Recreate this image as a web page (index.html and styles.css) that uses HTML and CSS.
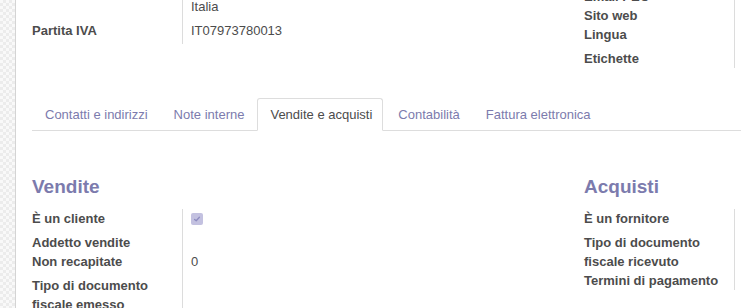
FILE: index.html
```html
<!DOCTYPE html>
<html lang="it">
<head>
<meta charset="UTF-8">
<meta name="viewport" content="width=device-width, initial-scale=1.0">
<title>Contatto - Vendite e acquisti</title>
<link rel="stylesheet" href="styles.css">
</head>
<body>
<div class="page">
    <div class="gutter"></div>
    <div class="sheet">
        <div class="groups top">
            <div class="group left pad-top">
                <div class="row"><div class="label"></div><div class="value">Italia</div></div>
                <div class="row vat"><div class="label">Partita IVA</div><div class="value">IT07973780013</div></div>
            </div>
            <div class="group right">
                <div class="row"><div class="label">Email PEC</div><div class="value"></div></div>
                <div class="row"><div class="label">Sito web</div><div class="value"></div></div>
                <div class="row"><div class="label">Lingua</div><div class="value"></div></div>
                <div class="row tags"><div class="label">Etichette</div><div class="value"></div></div>
            </div>
        </div>

        <ul class="tabs">
            <li><a>Contatti e indirizzi</a></li>
            <li><a>Note interne</a></li>
            <li class="active"><a>Vendite e acquisti</a></li>
            <li><a>Contabilità</a></li>
            <li><a>Fattura elettronica</a></li>
        </ul>

        <div class="tab-pane">
            <div class="groups">
                <div class="group left">
                    <h3 class="separator">Vendite</h3>
                    <div class="row check"><div class="label">È un cliente</div>
                        <div class="value">
                            <span class="checkbox">
                                <svg width="12" height="12" viewBox="0 0 12 12"><path d="M3.6 6.4 L5.2 7.8 L8.4 4.3" fill="none" stroke="#8e8cc0" stroke-width="1.3" stroke-linecap="round" stroke-linejoin="round"/></svg>
                            </span>
                        </div>
                    </div>
                    <div class="row"><div class="label">Addetto vendite</div><div class="value"></div></div>
                    <div class="row"><div class="label">Non recapitate</div><div class="value">0</div></div>
                    <div class="row doc"><div class="label">Tipo di documento<br>fiscale emesso</div><div class="value"></div></div>
                </div>
                <div class="group right">
                    <h3 class="separator">Acquisti</h3>
                    <div class="row check"><div class="label">È un fornitore</div><div class="value"></div></div>
                    <div class="row"><div class="label">Tipo di documento<br>fiscale ricevuto</div><div class="value"></div></div>
                    <div class="row"><div class="label">Termini di pagamento</div><div class="value"></div></div>
                </div>
            </div>
        </div>
    </div>
</div>
</body>
</html>
```
FILE: styles.css
```css
body {
    margin: 0;
    padding: 0;
    font-family: "Liberation Sans", Arial, sans-serif;
    font-size: 13px;
    line-height: 19px;
    color: #4c4c4c;
    background-color: #ffffff;
}
.page {
    display: flex;
    height: 308px;
    overflow: hidden;
}
.gutter {
    flex: 0 0 15px;
    border-right: 1px solid #d4d4d4;
    background-color: #f7f7f7;
    background-image: conic-gradient(#ececec 25%, #f9f9f9 0 50%, #ececec 0 75%, #f9f9f9 0);
    background-size: 6px 6px;
}
.sheet {
    flex: 1;
    padding-left: 16px;
    min-width: 0;
}
.groups {
    display: flex;
}
.groups.top {
    margin-top: -13px;
}
.group.left {
    flex: 0 0 552px;
}
.group.right {
    flex: 1;
}
.pad-top {
    padding-top: 10px;
}
.row {
    display: flex;
}
.label {
    box-sizing: border-box;
    flex: 0 0 151px;
    border-right: 1px solid #dcdcdc;
    font-weight: bold;
}
.value {
    flex: 1;
    padding-left: 8px;
}
.row.vat .label,
.row.vat .value {
    padding-top: 5px;
    padding-bottom: 4px;
}
.row.tags .label,
.row.tags .value {
    padding-top: 5px;
}
.row.check .label,
.row.check .value {
    padding-bottom: 5px;
}
.row.doc .label,
.row.doc .value {
    padding-top: 5px;
}
.checkbox {
    display: block;
    width: 12px;
    height: 12px;
    margin-top: 4px;
    border-radius: 2px;
    background-color: #c3c1e0;
}
.checkbox svg {
    display: block;
}
.tabs {
    display: flex;
    list-style: none;
    margin: 30px 0 0 0;
    padding: 0;
    border-bottom: 1px solid #dddddd;
}
.tabs li {
    margin-right: 2px;
    margin-bottom: -1px;
}
.tabs a {
    display: block;
    padding: 6px 10px 6px 12px;
    border: 1px solid transparent;
    border-radius: 3px 3px 0 0;
    color: #7c7bad;
    white-space: nowrap;
}
.tabs li.active a {
    color: #4c4c4c;
    background-color: #ffffff;
    border-color: #dddddd #dddddd transparent;
}
.separator {
    margin: 44px 0 10px 0;
    font-size: 19px;
    line-height: 24px;
    font-weight: bold;
    color: #7c7bad;
}
```
